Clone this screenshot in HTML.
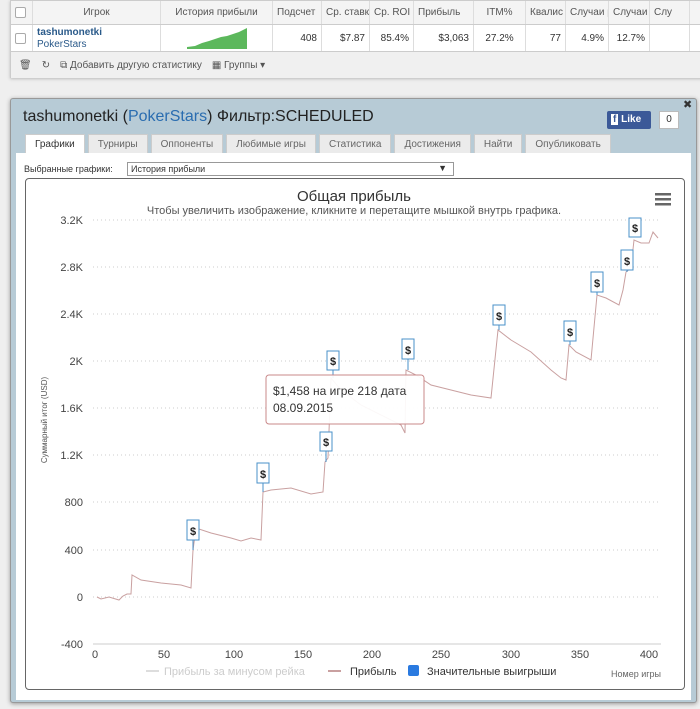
<!DOCTYPE html>
<html><head><meta charset="utf-8"><style>
*{box-sizing:border-box;margin:0;padding:0}
body{width:700px;height:709px;background:#efefef;font-family:"Liberation Sans","DejaVu Sans",sans-serif;position:relative;overflow:hidden;color:#333}
.top{position:absolute;left:10px;top:0;width:700px;height:78px;background:#fff;border:1px solid #ccc;box-shadow:0 1px 3px #bbb}
.hdr{height:24px;background:#f4f4f4;border-bottom:1px solid #ccc;display:flex;font-size:10px;color:#555}
.row{height:27px;display:flex;font-size:10px;border-bottom:1px solid #ccc}
.c{border-right:1px solid #ddd;display:flex;align-items:center;padding:0 4px;white-space:nowrap;overflow:hidden}
.tb{height:26px;background:#f0f0f0;font-size:10px;color:#555;display:flex;align-items:center;padding-left:8px;gap:10px}
.dlg{position:absolute;left:10px;top:98px;width:687px;height:605px;background:#b7cbd6;border:1px solid #999;border-radius:3px;box-shadow:0 1px 4px #999}
.tabs{position:absolute;left:14px;top:35px;display:flex;gap:3px;font-size:10px;color:#666}
.tabs div{background:#ebebeb;border:1px solid #ccc;border-bottom:none;height:19px;padding:4px 9px 0}
.tabs div.a{background:#fff;height:20px;color:#333}
.body{position:absolute;left:5px;top:54px;width:675px;height:547px;background:#fff}
.chart{position:absolute;left:9px;top:25px;width:660px;height:512px;border:1px solid #666;border-radius:4px;background:#fff}
</style></head><body>
<div class="top">
<div class="hdr">
<div class="c" style="width:22px"><span style="width:11px;height:11px;border:1px solid #aaa;border-radius:2px;background:#fff"></span></div>
<div class="c" style="width:128px;justify-content:center">Игрок</div>
<div class="c" style="width:112px;justify-content:center">История прибыли</div>
<div class="c" style="width:49px">Подсчет</div>
<div class="c" style="width:48px">Ср. ставк</div>
<div class="c" style="width:44px">Ср. ROI</div>
<div class="c" style="width:60px">Прибыль</div>
<div class="c" style="width:52px;justify-content:center">ITM%</div>
<div class="c" style="width:40px">Квалис</div>
<div class="c" style="width:43px">Случаи ра</div>
<div class="c" style="width:41px">Случаи</div>
<div class="c" style="width:40px">Слу</div>
</div>
<div class="row">
<div class="c" style="width:22px"><span style="width:11px;height:11px;border:1px solid #aaa;border-radius:2px"></span></div>
<div class="c" style="width:128px;display:block;padding-top:2px;line-height:12px"><b style="color:#2a5a8a">tashumonetki</b><br><span style="color:#2a5a8a">PokerStars</span></div>
<div class="c" style="width:112px;justify-content:center"><svg width="60" height="22"><polygon points="0,22 0,20 8,19 15,16 22,14 28,12 34,10 40,9 46,7 52,5 56,3 60,1 60,22" fill="#5cb85c"/></svg></div>
<div class="c" style="width:49px;justify-content:flex-end">408</div>
<div class="c" style="width:48px;justify-content:flex-end">$7.87</div>
<div class="c" style="width:44px;justify-content:flex-end">85.4%</div>
<div class="c" style="width:60px;justify-content:flex-end">$3,063</div>
<div class="c" style="width:52px;justify-content:center">27.2%</div>
<div class="c" style="width:40px;justify-content:flex-end">77</div>
<div class="c" style="width:43px;justify-content:flex-end">4.9%</div>
<div class="c" style="width:41px;justify-content:flex-end">12.7%</div>
<div class="c" style="width:40px"></div>
</div>
<div class="tb"><span>🗑</span><span>↻</span><span>⧉ Добавить другую статистику</span><span>▦ Группы ▾</span></div>
</div>

<div class="dlg">
<div style="position:absolute;left:12px;top:9px;font-size:16px;color:#222">tashumonetki (<span style="color:#2a6db0">PokerStars</span>) Фильтр:SCHEDULED</div>
<div style="position:absolute;left:596px;top:12px;width:44px;height:18px;background:#3b5998;color:#fff;font-size:10px;font-weight:bold;padding:3px 4px;border-radius:2px"><span style="background:#fff;color:#3b5998;padding:0 2px">f</span> Like</div>
<div style="position:absolute;left:648px;top:12px;width:20px;height:18px;background:#fff;border:1px solid #bbb;font-size:10px;text-align:center;line-height:16px">0</div>
<div style="position:absolute;left:672px;top:-1px;font-size:11px;font-weight:bold">✖</div>
<div class="tabs"><div class="a">Графики</div><div>Турниры</div><div>Оппоненты</div><div>Любимые игры</div><div>Статистика</div><div>Достижения</div><div>Найти</div><div>Опубликовать</div></div>
<div class="body">
<div style="position:absolute;left:8px;top:11px;font-size:9px">Выбранные графики:</div>
<div style="position:absolute;left:111px;top:9px;width:327px;height:14px;border:1px solid #999;font-size:9px;padding:1px 3px">История прибыли<span style="position:absolute;right:6px;top:0">▼</span></div>
<div class="chart">
<svg width="660" height="512" style="position:absolute;left:-1px;top:-1px" font-family="Liberation Sans,DejaVu Sans,sans-serif">
<g transform="translate(-24,-178)">
<text x="353" y="201" font-size="15" fill="#333" text-anchor="middle">Общая прибыль</text>
<text x="353" y="214" font-size="11" fill="#555" text-anchor="middle">Чтобы увеличить изображение, кликните и перетащите мышкой внутрь графика.</text>
<g fill="#666"><rect x="654" y="193" width="16" height="2.5"/><rect x="654" y="198" width="16" height="2.5"/><rect x="654" y="203" width="16" height="2.5"/></g>
<g stroke="#ccc" stroke-dasharray="1,3">
<line x1="92" x2="660" y1="220" y2="220"/><line x1="92" x2="660" y1="267" y2="267"/><line x1="92" x2="660" y1="314" y2="314"/><line x1="92" x2="660" y1="361" y2="361"/><line x1="92" x2="660" y1="408" y2="408"/><line x1="92" x2="660" y1="455" y2="455"/><line x1="92" x2="660" y1="502" y2="502"/><line x1="92" x2="660" y1="550" y2="550"/><line x1="92" x2="660" y1="597" y2="597"/>
</g>
<line x1="92" x2="660" y1="644" y2="644" stroke="#ccc"/>
<g font-size="11" fill="#444" text-anchor="end">
<text x="82" y="224">3.2K</text><text x="82" y="271">2.8K</text><text x="82" y="318">2.4K</text><text x="82" y="365">2K</text><text x="82" y="412">1.6K</text><text x="82" y="459">1.2K</text><text x="82" y="506">800</text><text x="82" y="554">400</text><text x="82" y="601">0</text><text x="82" y="648">-400</text>
</g>
<g font-size="11" fill="#444" text-anchor="middle">
<text x="94" y="658">0</text><text x="163" y="658">50</text><text x="233" y="658">100</text><text x="302" y="658">150</text><text x="371" y="658">200</text><text x="440" y="658">250</text><text x="510" y="658">300</text><text x="579" y="658">350</text><text x="648" y="658">400</text>
</g>
<text transform="translate(46,420) rotate(-90)" font-size="8" fill="#555" text-anchor="middle">Суммарный итог (USD)</text>
<polyline fill="none" stroke="#c9a0a0" stroke-width="1" points="96,597 100,599 108,597 118,600 122,596 126,594 130,594 131,575 140,580 160,583 180,585 190,588 192,550 195,528 210,533 230,538 240,541 250,538 260,540 262,492 270,490 290,488 310,494 322,492 324,462 327,458 330,378 340,390 360,405 380,415 400,425 404,433 405,370 415,375 430,385 450,390 470,395 490,398 497,330 510,340 530,352 550,370 560,378 565,380 568,345 575,352 590,360 596,295 605,298 618,305 622,290 625,272 630,268 633,240 640,243 648,243 652,232 657,238"/>
<g stroke="#4a90c8" fill="#fff" stroke-width="1">
<line x1="192" y1="540" x2="192" y2="550"/><rect x="186" y="520" width="12" height="20"/>
<line x1="262" y1="483" x2="262" y2="492"/><rect x="256" y="463" width="12" height="20"/>
<line x1="325" y1="451" x2="325" y2="462"/><rect x="319" y="432" width="12" height="19"/>
<line x1="332" y1="370" x2="332" y2="378"/><rect x="326" y="351" width="12" height="19"/>
<line x1="407" y1="359" x2="407" y2="370"/><rect x="401" y="339" width="12" height="20"/>
<line x1="498" y1="325" x2="498" y2="330"/><rect x="492" y="305" width="12" height="20"/>
<line x1="569" y1="341" x2="569" y2="345"/><rect x="563" y="321" width="12" height="20"/>
<line x1="596" y1="292" x2="596" y2="295"/><rect x="590" y="272" width="12" height="20"/>
<line x1="626" y1="270" x2="626" y2="272"/><rect x="620" y="250" width="12" height="20"/>
<rect x="628" y="218" width="12" height="19"/>
</g>
<g font-size="11" font-weight="bold" fill="#222" text-anchor="middle">
<text x="192" y="535">$</text><text x="262" y="478">$</text><text x="325" y="446">$</text><text x="332" y="365">$</text><text x="407" y="354">$</text><text x="498" y="320">$</text><text x="569" y="336">$</text><text x="596" y="287">$</text><text x="626" y="265">$</text><text x="634" y="232">$</text>
</g>
<rect x="265" y="375" width="158" height="49" rx="3" fill="#fff" fill-opacity="0.93" stroke="#c9898a"/>
<text x="272" y="395" font-size="12" fill="#333">$1,458 на игре 218 дата</text>
<text x="272" y="412" font-size="12" fill="#333">08.09.2015</text>
<line x1="145" x2="158" y1="671" y2="671" stroke="#ddd" stroke-width="2"/>
<text x="163" y="675" font-size="11" fill="#ccc">Прибыль за минусом рейка</text>
<line x1="327" x2="340" y1="671" y2="671" stroke="#c9a0a0" stroke-width="2"/>
<text x="349" y="675" font-size="11" fill="#333">Прибыль</text>
<rect x="407" y="665" width="11" height="11" rx="2" fill="#2a7ae0"/>
<text x="426" y="675" font-size="11" fill="#333">Значительные выигрыши</text>
<text x="610" y="677" font-size="9" fill="#666">Номер игры</text>
</g>
</svg>
</div>
</div>
</div>
</body></html>
